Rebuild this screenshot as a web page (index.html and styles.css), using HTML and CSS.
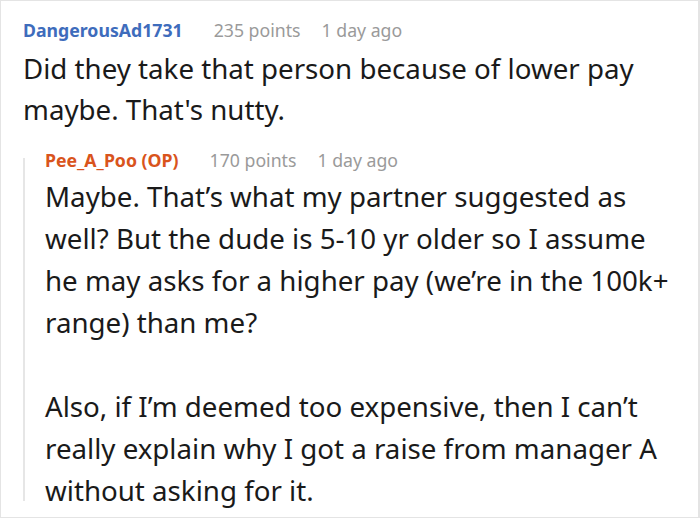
FILE: index.html
```html
<!DOCTYPE html>
<html>
<head>
<meta charset="utf-8">
<link rel="stylesheet" href="styles.css">
</head>
<body>
<div class="frame">
  <div class="comment">
    <div class="meta">
      <span class="author">DangerousAd1731</span>
      <span class="points">235 points</span>
      <span class="time">1 day ago</span>
    </div>
    <div class="body">
      <p>Did they take that person because of lower pay maybe. That's nutty.</p>
    </div>
    <div class="reply">
      <div class="meta">
        <span class="author op">Pee_A_Poo (OP)</span>
        <span class="points">170 points</span>
        <span class="time">1 day ago</span>
      </div>
      <div class="body">
        <p>Maybe. That’s what my partner suggested as well? But the dude is 5-10 yr older so I assume he may asks for a higher pay (we’re in the 100k+ range) than me?</p>
        <p>Also, if I’m deemed too expensive, then I can’t really explain why I got a raise from manager A without asking for it.</p>
      </div>
    </div>
  </div>
</div>
</body>
</html>
```
FILE: styles.css
```css
html, body {
  margin: 0;
  padding: 0;
  background: #ffffff;
}
.frame {
  width: 700px;
  height: 518px;
  box-sizing: border-box;
  border: 1px solid #e4e4e4;
  border-right-width: 2px;
  font-family: "Noto Sans", "DejaVu Sans", sans-serif;
  color: #1a1a1a;
}
.comment {
  padding: 16px 0 0 22px;
}
.meta {
  display: flex;
  gap: 21px;
  font-size: 17.7px;
  line-height: 26px;
  color: #9a9a9a;
}
.author {
  font-weight: bold;
  color: #3e6cbc;
  margin-right: 10px;
}
.author.op {
  color: #d9541c;
}
.body {
  font-size: 27.7px;
  line-height: 41px;
  margin-top: 4.75px;
  width: 640px;
}
.body p {
  margin: 0;
}
.reply {
  position: relative;
  margin-top: 17px;
  height: 354px;
  padding-left: 22px;
}
.reply::before {
  content: "";
  position: absolute;
  left: 0;
  top: 11px;
  bottom: 0;
  width: 2px;
  background: #e6e6e6;
}
.reply .body {
  margin-top: 2.6px;
  width: 630px;
  line-height: 42px;
}
.reply .body p + p {
  margin-top: 42px;
}
```
